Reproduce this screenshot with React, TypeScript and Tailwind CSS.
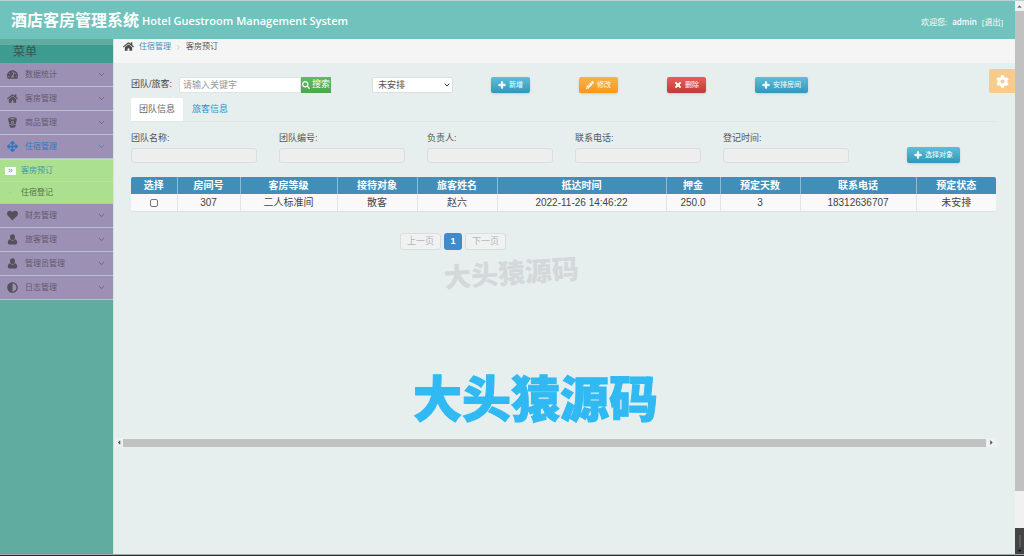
import { useState } from "react";
import type { ReactNode } from "react";
import { ChevronDown, ChevronRight, ChevronsRight } from "lucide-react";
import {
    FaTachometerAlt,
    FaHome,
    FaHeart,
    FaUser,
    FaAdjust,
    FaArrowsAlt,
    FaPlus,
    FaPencilAlt,
    FaTimes,
    FaCog,
    FaSearch,
    FaCaretUp,
    FaCaretDown,
    FaCaretLeft,
    FaCaretRight,
} from "react-icons/fa";

interface MenuEntry {
    label: string;
    icon: ReactNode;
    children?: string[];
}

function BucketIcon() {
    return (
        <svg viewBox="0 0 16 16" className="w-[11px] h-[11px]" fill="currentColor">
            <path
                fillRule="evenodd"
                d="M8 0.5c3.7 0 6.3 0.9 6.3 2.2 0 0.9-0.9 5.3-1.2 6.7C12 10.500 10.300 11 8 11s-4-.5-5.100-1.600C2.600 8 1.700 3.600 1.700 2.700 1.700 1.400 4.300.5 8 .5zM8 1.800c-2.300 0-4 .4-4 .9s1.700.9 4 .9 4-.4 4-.9-1.700-.9-4-.9zM8 5.400a2.200 2.200 0 1 0 0 4.400 2.200 2.200 0 0 0 0-4.400zM3.200 11c1.200.8 2.900 1.200 4.800 1.200s3.600-.4 4.800-1.200l-.5 2.700c-.2 1.100-2 1.800-4.300 1.800s-4.100-.7-4.300-1.800z"
            />
            <circle cx="8" cy="7.600" r="1.200" />
        </svg>
    );
}

// old style user glyph: round head on a full, wide body
function UserIcon() {
    return (
        <svg viewBox="0 0 16 16" className="w-[11px] h-[11px]" fill="currentColor">
            <ellipse cx="8" cy="4.600" rx="3.600" ry="4.200" />
            <path d="M4.200 7.600C2 8.100 1.200 10 1.200 12.800 1.200 14.400 2 15.300 3.500 15.300h9c1.500 0 2.300-.9 2.300-2.500 0-2.800-.8-4.700-3-5.200C10.800 8.900 9.500 9.500 8 9.500S5.200 8.900 4.200 7.600z" />
        </svg>
    );
}

const menu: MenuEntry[] = [
    { label: "数据统计", icon: <FaTachometerAlt /> },
    { label: "客房管理", icon: <FaHome /> },
    { label: "商品管理", icon: <BucketIcon /> },
    { label: "住宿管理", icon: <FaArrowsAlt strokeWidth={20} />, children: ["客房预订", "住宿登记"] },
    { label: "财务管理", icon: <FaHeart /> },
    { label: "旅客管理", icon: <UserIcon /> },
    { label: "管理员管理", icon: <UserIcon /> },
    { label: "日志管理", icon: <FaAdjust /> },
];

const columns = [
    { title: "选择", width: "w-[46px]" },
    { title: "房间号", width: "w-[63px]" },
    { title: "客房等级", width: "w-[97px]" },
    { title: "接待对象", width: "w-[80px]" },
    { title: "旅客姓名", width: "w-[80px]" },
    { title: "抵达时间", width: "w-[169px]" },
    { title: "押金", width: "w-[54px]" },
    { title: "预定天数", width: "w-[80px]" },
    { title: "联系电话", width: "w-[116px]" },
    { title: "预定状态", width: "w-[80px]" },
];

const orders = [
    ["307", "二人标准间", "散客", "赵六", "2022-11-26 14:46:22", "250.0", "3", "18312636707", "未安排"],
];

const fields = [
    { id: "teamName", label: "团队名称:" },
    { id: "teamCode", label: "团队编号:" },
    { id: "principal", label: "负责人:" },
    { id: "phone", label: "联系电话:" },
    { id: "registerTime", label: "登记时间:" },
];

const tones = {
    info: "bg-linear-to-b from-[#5bbfdc] to-[#3197b8]",
    warning: "bg-linear-to-b from-[#fbb04c] to-[#f89810]",
    danger: "bg-linear-to-b from-[#ea5e59] to-[#c13a34]",
};

function ActionButton({ tone, icon, children }: { tone: keyof typeof tones; icon: ReactNode; children: ReactNode }) {
    return (
        <button
            type="button"
            className={`flex items-center justify-center gap-[3px] h-4 px-[7px] rounded-xs text-[7px] leading-4 text-white whitespace-nowrap shadow-sm ${tones[tone]}`}
        >
            <span className="text-[8px]">{icon}</span>
            {children}
        </button>
    );
}

function Header() {
    return (
        <header className="flex items-center justify-between h-[38px] pl-[11px] pr-3 bg-[#70c2bc] text-white">
            <h1 className="flex items-center gap-[3px] font-bold whitespace-nowrap">
                <span className="text-[16px]">酒店客房管理系统</span>
                <span className="text-[11px] pt-[3px] font-semibold">Hotel Guestroom Management System</span>
            </h1>
            <div className="flex items-center gap-[5px] pt-1 text-[8px]">
                <span>欢迎您:</span>
                <span className="text-[8px] font-semibold">admin</span>
                <a href="#logout">[退出]</a>
            </div>
        </header>
    );
}

function Sidebar() {
    const [open, setOpen] = useState("住宿管理");

    return (
        <nav className="w-[113px] shrink-0 pt-1.5 bg-[#60aca1] text-[8px] text-[#62596c]">
            <h2 className="h-[18px] pl-[13px] bg-[#3b9c8f] text-[12px] leading-[14px] text-[#35564f]">菜单</h2>
            {menu.map((item) => {
                const active = open === item.label;
                return (
                    <div key={item.label}>
                        <button
                            type="button"
                            onClick={() => setOpen(item.label)}
                            className={`flex items-center w-full h-6 pl-[7px] pr-[7px] bg-[#9c91b4] border-b border-[#b4c3cc] ${active ? "text-[#2f78c4]" : ""}`}
                        >
                            <span className={`w-[18px] text-[11px] ${active ? "" : "text-[#55515a]"}`}>{item.icon}</span>
                            <span className="grow text-left">{item.label}</span>
                            <ChevronDown className="size-[9px]" />
                        </button>
                        {active && item.children && (
                            <ul className="bg-[#aae08e] border-b border-[#b4c3cc]">
                                {item.children.map((child, i) => (
                                    <li key={child} className="border-t border-[#b7e5a0]">
                                        <a
                                            href="#"
                                            className={`flex items-center h-[21px] pl-[5px] gap-[5px] ${i === 0 ? "text-[#4398ad]" : "text-[#56714c]"}`}
                                        >
                                            <span
                                                className={`flex items-center justify-center w-[11px] h-[8px] text-[7px] ${i === 0 ? "bg-white text-[#4b88b7]" : "text-[#9bcc82]"}`}
                                            >
                                                {i === 0 ? <ChevronsRight className="size-[7px]" strokeWidth={3} /> : "-"}
                                            </span>
                                            {child}
                                        </a>
                                    </li>
                                ))}
                            </ul>
                        )}
                    </div>
                );
            })}
        </nav>
    );
}

function Breadcrumb() {
    return (
        <div className="flex items-start gap-1 h-6 pl-[9px] pt-px bg-[#f5f5f5] text-[8px] leading-[14px] text-[#555]">
            <FaHome className="mt-px mr-px text-[11px] text-[#4c4c4c]" />
            <a href="#" className="text-[#4c8fbd]">住宿管理</a>
            <ChevronRight className="mt-[4px] size-[7px] text-[#a2a6af]" />
            <span>客房预订</span>
        </div>
    );
}

function Toolbar() {
    return (
        <div className="flex items-center h-4">
            <form className="flex items-center w-[241px] text-[9px]" onSubmit={(e) => e.preventDefault()}>
                <label htmlFor="keyword" className="w-12 shrink-0 whitespace-nowrap text-[#444]">团队/旅客:</label>
                <input
                    id="keyword"
                    type="text"
                    placeholder="请输入关键字"
                    className="w-[122px] h-4 px-[3px] rounded-l-xs bg-white border border-[#e0e3e3] placeholder:text-[#999]"
                />
                <button type="submit" className="flex items-center justify-center gap-[2px] w-[30px] h-4 bg-linear-to-b from-[#5fbc5f] to-[#50a450] text-white whitespace-nowrap">
                    <FaSearch className="text-[8px]" />
                    搜索
                </button>
            </form>
            <div className="relative flex w-[81px] mr-[38px]">
                <select aria-label="状态" className="block appearance-none w-full h-4 pl-[5px] rounded-xs bg-white border border-[#dcdfdf] text-[9px] leading-[14px] text-[#555]">
                    <option>未安排</option>
                    <option>已安排</option>
                </select>
                <ChevronDown className="absolute right-[2px] top-1 size-2 text-[#333] pointer-events-none" strokeWidth={3} />
            </div>
            <div className="w-[88px]">
                <ActionButton tone="info" icon={<FaPlus strokeWidth={40} />}>新增</ActionButton>
            </div>
            <div className="w-[88px]">
                <ActionButton tone="warning" icon={<FaPencilAlt />}>修改</ActionButton>
            </div>
            <div className="w-[88px]">
                <ActionButton tone="danger" icon={<FaTimes strokeWidth={50} />}>删除</ActionButton>
            </div>
            <ActionButton tone="info" icon={<FaPlus strokeWidth={40} />}>安排房间</ActionButton>
        </div>
    );
}

function OrderTable() {
    return (
        <div className="mt-[14px] rounded-xs overflow-hidden border-b border-[#dde1e1]">
            <table className="w-full table-fixed text-[10px] leading-4 text-center text-[#444]">
                <thead className="bg-[#438eb9] text-white">
                    <tr>
                        {columns.map((col) => (
                            <th key={col.title} className={`h-[17px] p-0 font-bold border-r border-[#8fbcd5] last:border-r-0 ${col.width}`}>
                                {col.title}
                            </th>
                        ))}
                    </tr>
                </thead>
                <tbody className="bg-[#f9f9f9]">
                    {orders.map((row, i) => (
                        <tr key={i}>
                            <td className="h-[17px] p-0 border-r border-[#e4e6e6]">
                                <input type="checkbox" aria-label="选择" className="block mx-auto appearance-none size-[8px] bg-white border border-[#777] rounded-[2px] checked:bg-[#438eb9]" />
                            </td>
                            {row.map((cell, j) => (
                                <td key={j} className="h-[17px] p-0 border-r border-[#e4e6e6] last:border-r-0">{cell}</td>
                            ))}
                        </tr>
                    ))}
                </tbody>
            </table>
        </div>
    );
}

function Pagination() {
    return (
        <div className="flex gap-[3px] mt-[21px] ml-[269px] text-[9px] leading-[15px]">
            <button type="button" disabled className="w-[41px] h-[17px] rounded-[3px] border border-[#dadddd] bg-[#f0f1f1] text-[#b5b5b5]">上一页</button>
            <button type="button" className="w-[18px] h-[17px] rounded-[3px] bg-[#428bca] text-white font-bold">1</button>
            <button type="button" disabled className="w-[41px] h-[17px] rounded-[3px] border border-[#dadddd] bg-[#f0f1f1] text-[#b5b5b5]">下一页</button>
        </div>
    );
}

function Content() {
    const [tab, setTab] = useState("团队信息");

    return (
        <main className="relative flex flex-col grow min-w-0 border-l border-[#d5e3e1] bg-[#e6efee]">
            <Breadcrumb />
            <div className="pl-[17px] pr-[19px] pt-[14px]">
                <Toolbar />
                <div className="flex mt-[5px] border-b border-[#e0e7e6] text-[9px]" role="tablist">
                    {["团队信息", "旅客信息"].map((name) => (
                        <button
                            key={name}
                            type="button"
                            role="tab"
                            aria-selected={tab === name}
                            onClick={() => setTab(name)}
                            className={`h-[23px] px-2 mr-px rounded-t-xs ${tab === name ? "bg-white text-[#666]" : "text-[#2b94cb]"}`}
                        >
                            {name}
                        </button>
                    ))}
                </div>
                <div className="flex items-end mt-[10px]">
                    {fields.map((field) => (
                        <div key={field.id} className="w-[148px]">
                            <label htmlFor={field.id} className="block mb-[3px] text-[9px] leading-[13px] text-[#555]">{field.label}</label>
                            <input id={field.id} type="text" readOnly className="block w-[126px] h-[15px] px-1 rounded-[3px] border border-[#dadede] bg-[#eeeeee] text-[9px]" />
                        </div>
                    ))}
                    <div className="ml-9">
                        <ActionButton tone="info" icon={<FaPlus strokeWidth={40} />}>选择对象</ActionButton>
                    </div>
                </div>
                <OrderTable />
                <Pagination />
            </div>

            {/* watermarks lie over the page */}
            <div className="absolute left-[330px] top-[219px] -rotate-4 text-[27px] leading-8 font-black text-[#d5d8da] whitespace-nowrap pointer-events-none">大头猿源码</div>
            <div className="absolute left-[299px] top-[329px] text-[49px] leading-[64px] font-black text-[#30b9f2] [-webkit-text-stroke:1px_#30b9f2] whitespace-nowrap pointer-events-none">大头猿源码</div>

            <div className="flex items-center h-[9px] mt-[188px] mr-[18px] ml-px bg-[#eef1f1] text-[7px] text-[#555]">
                <FaCaretLeft className="w-2" />
                <div className="grow h-2 bg-[#c1c1c1]" />
                <FaCaretRight className="w-[11px]" />
            </div>

            <button type="button" aria-label="设置" className="absolute right-0 top-[30px] flex items-center justify-center w-[26px] h-6 rounded-l-xs bg-[#f7cc8b] text-white text-[13px]">
                <FaCog />
            </button>
        </main>
    );
}

function PageScrollbar() {
    return (
        <div className="flex flex-col w-[9px] shrink-0 bg-[#f1f1f1] text-[7px] text-[#777]">
            <div className="flex items-center justify-center h-[10px]"><FaCaretUp /></div>
            <div className="basis-[480px] bg-[#c1c1c1]" />
            <div className="grow" />
            <div className="flex flex-col items-center justify-end h-[26px] bg-[#444] text-[#111]">
                <span className="w-0.5 h-3 bg-[#5b5b5b]" />
                <FaCaretDown />
            </div>
        </div>
    );
}

export default function App() {
    return (
        <div className="flex flex-col min-h-screen border-t border-[#b9d3d2] border-b border-b-[#2c2f2f] bg-[#e6efee] font-['Open_Sans','Noto_Sans_CJK_SC',sans-serif]">
            <div className="flex grow border-b border-[#a3aaa9]">
                <div className="flex flex-col grow min-w-0">
                    <Header />
                    <div className="flex grow font-['Liberation_Sans','Noto_Sans_CJK_SC',sans-serif]">
                        <Sidebar />
                        <Content />
                    </div>
                </div>
                <PageScrollbar />
            </div>
        </div>
    );
}
